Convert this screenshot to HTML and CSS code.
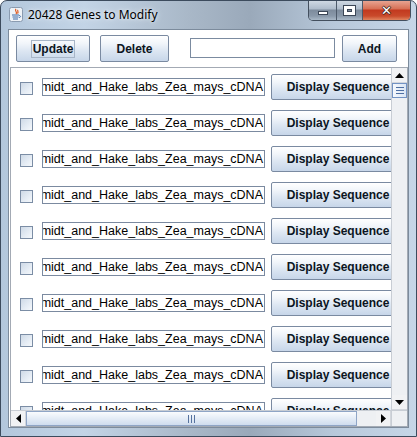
FILE: index.html
```html
<!DOCTYPE html>
<html>
<head>
<meta charset="utf-8">
<link rel="stylesheet" href="styles.css">
</head>
<body>
<div class="window">
  <div class="titlebar">
    <svg class="app-icon" width="14" height="15" viewBox="0 0 14 15">
      <rect x="0.5" y="0.5" width="13" height="14" rx="2" fill="#eef2f7" stroke="#8a9bb0"/>
      <path d="M7 2 C5 4 9 5 7 7 M9 3 C8 4 10 5 8.5 6.5" stroke="#e0561b" stroke-width="1.2" fill="none"/>
      <path d="M3 8 H10 M3.5 10 H9.5 M4 12 H9" stroke="#3f6aa8" stroke-width="1.1"/>
      <path d="M10 8.5 C12 8.5 12 10.5 10 10.5" stroke="#3f6aa8" stroke-width="1" fill="none"/>
    </svg>
    <span class="title">20428 Genes to Modify</span>
    <div class="caption">
      <div class="cap cap-min"><span class="glyph-min"></span></div>
      <div class="cap cap-max"><span class="glyph-max"></span></div>
      <div class="cap cap-close"><span class="glyph-close">&#x2715;</span></div>
    </div>
  </div>
  <div class="client">
    <div class="toolbar">
      <button class="btn btn-update"><span class="focus">Update</span></button>
      <button class="btn btn-delete">Delete</button>
      <div class="search"></div>
      <button class="btn btn-add">Add</button>
    </div>
    <div class="scrollpane">
      <div class="sp-main">
        <div class="viewport">
          <div class="row"><span class="check"></span><div class="field"><span>Schmidt_and_Hake_labs_Zea_mays_cDNA</span></div><button class="btn btn-seq">Display Sequence</button></div>
          <div class="row"><span class="check"></span><div class="field"><span>Schmidt_and_Hake_labs_Zea_mays_cDNA</span></div><button class="btn btn-seq">Display Sequence</button></div>
          <div class="row"><span class="check"></span><div class="field"><span>Schmidt_and_Hake_labs_Zea_mays_cDNA</span></div><button class="btn btn-seq">Display Sequence</button></div>
          <div class="row"><span class="check"></span><div class="field"><span>Schmidt_and_Hake_labs_Zea_mays_cDNA</span></div><button class="btn btn-seq">Display Sequence</button></div>
          <div class="row"><span class="check"></span><div class="field"><span>Schmidt_and_Hake_labs_Zea_mays_cDNA</span></div><button class="btn btn-seq">Display Sequence</button></div>
          <div class="row"><span class="check"></span><div class="field"><span>Schmidt_and_Hake_labs_Zea_mays_cDNA</span></div><button class="btn btn-seq">Display Sequence</button></div>
          <div class="row"><span class="check"></span><div class="field"><span>Schmidt_and_Hake_labs_Zea_mays_cDNA</span></div><button class="btn btn-seq">Display Sequence</button></div>
          <div class="row"><span class="check"></span><div class="field"><span>Schmidt_and_Hake_labs_Zea_mays_cDNA</span></div><button class="btn btn-seq">Display Sequence</button></div>
          <div class="row"><span class="check"></span><div class="field"><span>Schmidt_and_Hake_labs_Zea_mays_cDNA</span></div><button class="btn btn-seq">Display Sequence</button></div>
          <div class="row"><span class="check"></span><div class="field"><span>Schmidt_and_Hake_labs_Zea_mays_cDNA</span></div><button class="btn btn-seq">Display Sequence</button></div>
        </div>
        <div class="vscroll">
          <div class="sb-btn"><svg width="9" height="5" viewBox="0 0 9 5"><path d="M0 5 L4.5 0 L9 5 Z" fill="#000"/></svg></div>
          <div class="v-thumb"><span></span><span></span><span></span></div>
          <div class="v-track"></div>
          <div class="sb-btn"><svg width="9" height="5" viewBox="0 0 9 5"><path d="M0 0 L4.5 5 L9 0 Z" fill="#000"/></svg></div>
        </div>
      </div>
      <div class="sp-bottom">
        <div class="hscroll">
          <div class="sb-btn h"><svg width="5" height="9" viewBox="0 0 5 9"><path d="M5 0 L0 4.5 L5 9 Z" fill="#000"/></svg></div>
          <div class="h-thumb"><span></span><span></span><span></span></div>
          <div class="h-track"></div>
          <div class="sb-btn h"><svg width="5" height="9" viewBox="0 0 5 9"><path d="M0 0 L5 4.5 L0 9 Z" fill="#000"/></svg></div>
        </div>
        <div class="corner"></div>
      </div>
    </div>
  </div>
</div>
</body>
</html>
```

FILE: styles.css
```css
* { box-sizing: border-box; }

body {
  margin: 0;
  width: 417px;
  height: 437px;
  overflow: hidden;
  background: #fff;
  font-family: "Liberation Sans", Arial, sans-serif;
}

.window {
  width: 417px;
  height: 437px;
  border: 1px solid #3c4b5d;
  border-radius: 7px 7px 0 0;
  background: linear-gradient(90deg, #b3c7dc 0%, #c3d4e6 20%, #a9b8c8 45%, #9aa9ba 60%, #b7c8da 80%, #c6d6e7 100%);
  display: flex;
  flex-direction: column;
  overflow: hidden;
}

.titlebar {
  height: 28px;
  display: flex;
  align-items: flex-start;
  flex-shrink: 0;
}

.app-icon {
  margin: 6px 0 0 8px;
  flex-shrink: 0;
}

.title {
  margin: 6px 0 0 5px;
  font-family: "Noto Sans", "Open Sans", sans-serif;
  font-size: 12px;
  line-height: 16px;
  color: #000;
  text-shadow: 0 0 6px #e8eef5, 0 0 3px #e8eef5;
}

.caption {
  margin-left: auto;
  margin-right: 5px;
  margin-top: -1px;
  display: flex;
  border: 1px solid #434f5e;
  border-top: none;
  border-radius: 0 0 5px 5px;
  overflow: hidden;
}

.cap {
  height: 20px;
  display: flex;
  align-items: center;
  justify-content: center;
}

.cap-min, .cap-max {
  width: 28px;
  background: linear-gradient(180deg, #d3dce6 0%, #aebccb 45%, #7d8b9c 50%, #8a99aa 80%, #a9b8c7 100%);
  border-right: 1px solid #4d5a6a;
}

.cap-max { width: 26px; }

.cap-close {
  width: 47px;
  background: linear-gradient(180deg, #e9aa98 0%, #d66f55 45%, #c2391f 50%, #c94a2b 80%, #e0845f 100%);
}

.glyph-min {
  width: 10px;
  height: 4px;
  margin-top: 6px;
  background: #fff;
  border: 1px solid #3b4656;
}

.glyph-max {
  width: 11px;
  height: 9px;
  border: 3px solid #fff;
  border-top-width: 3px;
  outline: 1px solid #3b4656;
  box-shadow: inset 0 0 0 1px #3b4656;
}

.glyph-close {
  color: #fff;
  font-family: "DejaVu Sans", sans-serif;
  font-weight: bold;
  font-size: 13px;
  line-height: 13px;
  text-shadow: 1px 0 0 #4a2a22, -1px 0 0 #4a2a22, 0 1px 0 #4a2a22, 0 -1px 0 #4a2a22;
}

.client {
  margin: 0 7px;
  height: 399px;
  flex-shrink: 0;
  background: #fff;
  border: 1px solid #7c8b9c;
  display: flex;
  flex-direction: column;
}

.toolbar {
  height: 37px;
  flex-shrink: 0;
  display: flex;
  align-items: flex-start;
  padding: 5px 0 0 7px;
}

.btn {
  font-family: "Liberation Sans", Arial, sans-serif;
  font-weight: bold;
  font-size: 12px;
  color: #0c1522;
  border: 1px solid #7a8aa1;
  border-radius: 2px;
  background: linear-gradient(180deg, #ffffff 0%, #f1f5fa 30%, #dce6f2 60%, #c7d6e9 100%);
  padding: 0;
  display: flex;
  align-items: center;
  justify-content: center;
  flex-shrink: 0;
}

.btn-update { width: 74px; height: 27px; }
.btn-delete { width: 69px; height: 27px; margin-left: 10px; }
.btn-add { width: 55px; height: 27px; margin-left: 7px; }

.focus {
  border: 1px solid #a8b6c8;
  padding: 1px 1px;
  line-height: 14px;
}

.search {
  width: 145px;
  height: 20px;
  margin: 3px 0 0 21px;
  border: 1px solid #7b8ba0;
  background: #fff;
  flex-shrink: 0;
}

.scrollpane {
  margin-left: 1px;
  height: 360px;
  width: 398px;
  border: 1px solid #a3aab4;
  display: flex;
  flex-direction: column;
}

.sp-main {
  height: 342px;
  display: flex;
}

.viewport {
  width: 380px;
  height: 342px;
  overflow: hidden;
  background: #fff;
  padding-top: 1px;
}

.row {
  height: 36px;
  display: flex;
  align-items: center;
  padding-left: 9px;
  width: 410px;
}

.check {
  width: 13px;
  height: 13px;
  flex-shrink: 0;
  margin-top: 2px;
  border: 1px solid #7b8da5;
  background: linear-gradient(135deg, #cfdae7 0%, #e6edf5 60%, #f5f8fb 100%);
}

.field {
  width: 223px;
  height: 18px;
  margin-left: 9px;
  flex-shrink: 0;
  border: 1px solid #7b8aa0;
  background: #fff;
  overflow: hidden;
  display: flex;
  justify-content: flex-end;
  align-items: center;
  padding-right: 1px;
  font-size: 12.5px;
  color: #000;
  white-space: nowrap;
}

.btn-seq {
  width: 134px;
  height: 26px;
  margin-left: 6px;
}

.vscroll {
  width: 16px;
  height: 342px;
  display: flex;
  flex-direction: column;
  background: #eef0f3;
  border-left: 1px solid #c8cdd4;
}

.sb-btn {
  width: 15px;
  height: 15px;
  flex-shrink: 0;
  display: flex;
  align-items: center;
  justify-content: center;
  background: #f1f2f4;
  border-bottom: 1px solid #d2d6dc;
}

.sb-btn.h {
  border-bottom: none;
  border-right: 1px solid #d2d6dc;
  height: 15px;
}

.v-thumb {
  height: 15px;
  flex-shrink: 0;
  border: 1px solid #7393c4;
  background: linear-gradient(90deg, #f6f9fd, #dbe6f4);
  display: flex;
  flex-direction: column;
  justify-content: center;
  align-items: center;
  gap: 2px;
}

.v-thumb span {
  width: 8px;
  height: 1px;
  background: #4e6fa3;
}

.v-track { flex: 1; }

.sp-bottom {
  height: 16px;
  display: flex;
  border-top: 1px solid #c8cdd4;
}

.hscroll {
  width: 380px;
  display: flex;
  background: #eef0f3;
}

.h-thumb {
  width: 331px;
  flex-shrink: 0;
  border: 1px solid #8fa5c6;
  background: linear-gradient(180deg, #fafcfe 0%, #e4ecf6 50%, #cfdcee 100%);
  display: flex;
  justify-content: center;
  align-items: center;
  gap: 2px;
}

.h-thumb span {
  width: 1px;
  height: 8px;
  background: #56729e;
}

.h-track { flex: 1; }

.corner {
  width: 16px;
  background: #eef0f3;
  border-left: 1px solid #c8cdd4;
}
```
